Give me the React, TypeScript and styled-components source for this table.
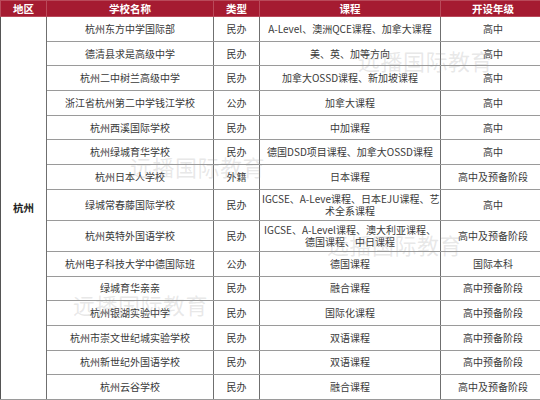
import React from "react";
import styled, { createGlobalStyle } from "styled-components";

const GlobalStyle = createGlobalStyle`
  html, body {
    margin: 0;
    padding: 0;
    background: #fff;
  }
  body {
    font-family: "Microsoft YaHei", "Noto Sans CJK SC", "Noto Sans", sans-serif;
  }
`;

const Wrap = styled.div`
  position: relative;
  width: 540px;
  height: 400px;
  overflow: hidden;
`;

const Table = styled.table`
  width: 540px;
  border-collapse: collapse;
  table-layout: fixed;
  font-size: 10px;
  color: #3a3a3a;
`;

const HeadCell = styled.th<{ $w: number }>`
  width: ${(p) => p.$w}px;
  height: 15px;
  padding: 0;
  background: #a51b31;
  color: #fff;
  font-weight: bold;
  font-size: 10.5px;
  line-height: 15px;
  text-align: center;
  border: 1px solid #b94a5a;
`;

const Row = styled.tr<{ $tall?: boolean }>`
  height: ${(p) => (p.$tall ? 31 : 24.7)}px;
`;

const Cell = styled.td`
  padding: 0 2px;
  text-align: center;
  vertical-align: middle;
  line-height: 12px;
  white-space: nowrap;
  border: 1px solid #9a9a9a;
  border-left-color: #6f6f6f;
  border-right-color: #6f6f6f;
`;

const RegionCell = styled(Cell)`
  font-weight: bold;
  font-size: 10.5px;
  color: #222;
  border-left: 1px solid #555;
`;

const Watermark = styled.div`
  position: absolute;
  font-size: 22px;
  letter-spacing: 0.5px;
  color: rgba(150, 150, 150, 0.22);
  white-space: nowrap;
  pointer-events: none;
`;

type School = {
  name: string;
  kind: string;
  course: string[];
  grade: string;
};

const schools: School[] = [
  { name: "杭州东方中学国际部", kind: "民办", course: ["A-Level、澳洲QCE课程、加拿大课程"], grade: "高中" },
  { name: "德清县求是高级中学", kind: "民办", course: ["美、英、加等方向"], grade: "高中" },
  { name: "杭州二中树兰高级中学", kind: "民办", course: ["加拿大OSSD课程、新加坡课程"], grade: "高中" },
  { name: "浙江省杭州第二中学钱江学校", kind: "公办", course: ["加拿大课程"], grade: "高中" },
  { name: "杭州西溪国际学校", kind: "民办", course: ["中加课程"], grade: "高中" },
  { name: "杭州绿城育华学校", kind: "民办", course: ["德国DSD项目课程、加拿大OSSD课程"], grade: "高中" },
  { name: "杭州日本人学校", kind: "外籍", course: ["日本课程"], grade: "高中及预备阶段" },
  { name: "绿城常春藤国际学校", kind: "民办", course: ["IGCSE、A-Leve课程、日本EJU课程、艺", "术全系课程"], grade: "高中" },
  { name: "杭州英特外国语学校", kind: "民办", course: ["IGCSE、A-Level课程、澳大利亚课程、", "德国课程、中日课程"], grade: "高中及预备阶段" },
  { name: "杭州电子科技大学中德国际班", kind: "公办", course: ["德国课程"], grade: "国际本科" },
  { name: "绿城育华亲亲", kind: "民办", course: ["融合课程"], grade: "高中预备阶段" },
  { name: "杭州银湖实验中学", kind: "民办", course: ["国际化课程"], grade: "高中预备阶段" },
  { name: "杭州市崇文世纪城实验学校", kind: "民办", course: ["双语课程"], grade: "高中预备阶段" },
  { name: "杭州新世纪外国语学校", kind: "民办", course: ["双语课程"], grade: "高中预备阶段" },
  { name: "杭州云谷学校", kind: "民办", course: ["融合课程"], grade: "高中及预备阶段" },
];

const marks = [
  { left: 358, top: 44 },
  { left: 130, top: 150 },
  { left: 327, top: 228 },
  { left: 73, top: 288 },
];

export default function App() {
  return (
    <Wrap>
      <GlobalStyle />
      <Table>
        <thead>
          <tr>
            <HeadCell $w={45}>地区</HeadCell>
            <HeadCell $w={166}>学校名称</HeadCell>
            <HeadCell $w={45}>类型</HeadCell>
            <HeadCell $w={180}>课程</HeadCell>
            <HeadCell $w={104}>开设年级</HeadCell>
          </tr>
        </thead>
        <tbody>
          {schools.map((s, i) => (
            <Row key={s.name} $tall={s.course.length > 1}>
              {i === 0 && <RegionCell rowSpan={schools.length}>杭州</RegionCell>}
              <Cell>{s.name}</Cell>
              <Cell>{s.kind}</Cell>
              <Cell>
                {s.course.map((line, j) => (
                  <React.Fragment key={j}>
                    {j > 0 && <br />}
                    {line}
                  </React.Fragment>
                ))}
              </Cell>
              <Cell>{s.grade}</Cell>
            </Row>
          ))}
        </tbody>
      </Table>
      {marks.map((m, i) => (
        <Watermark key={i} style={{ left: m.left, top: m.top }}>
          远播国际教育
        </Watermark>
      ))}
    </Wrap>
  );
}
